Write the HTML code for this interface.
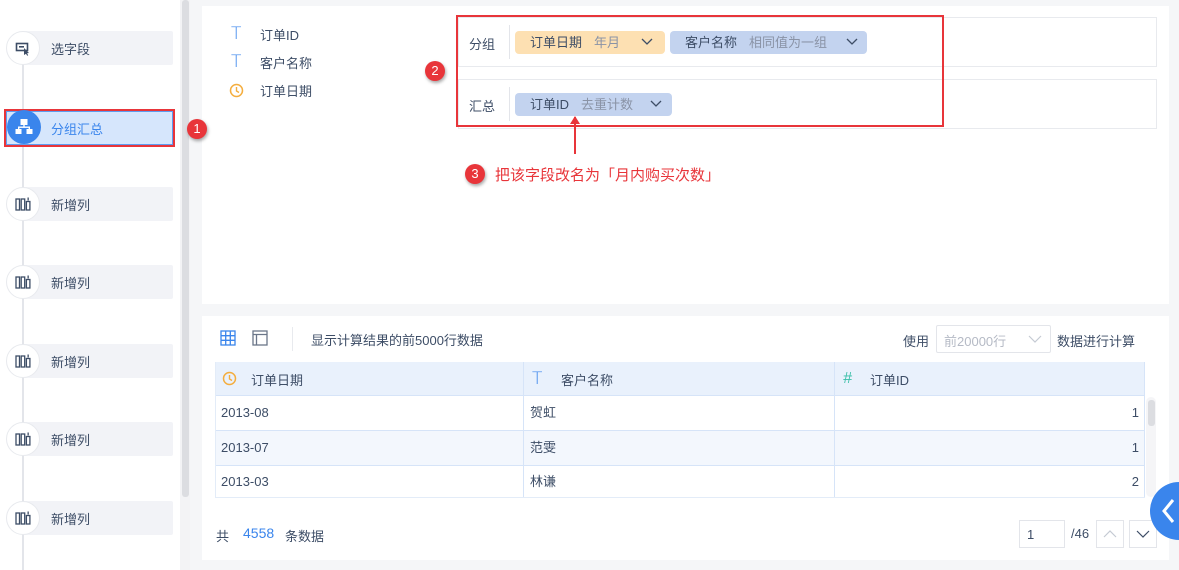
<!DOCTYPE html>
<html><head><meta charset="utf-8"><style>
*{margin:0;padding:0;box-sizing:border-box}
body{width:1179px;height:570px;position:relative;overflow:hidden;background:#f5f6f8;font-family:"Liberation Sans","Noto Sans CJK SC",sans-serif;font-size:13px;color:#3d4d66}
.abs{position:absolute}
.side{left:0;top:0;width:180px;height:570px;background:#fff}
.vline{left:22px;top:40px;width:2px;height:530px;background:#e3e5ea}
.item{left:23px;width:150px;height:34px;background:#f2f3f7;border-radius:2px}
.item span{position:absolute;left:28px;top:8px;font-size:13px}
.circ{width:34px;height:34px;border-radius:50%;background:#fff;border:1px solid #e8eaee;left:6px}
.badge{width:20px;height:20px;border-radius:50%;background:#e8353a;color:#fff;font-size:13px;text-align:center;line-height:20px;box-shadow:1px 2px 3px rgba(0,0,0,.35);z-index:5}
.chip{height:23px;border-radius:4px;line-height:23px;font-size:13px;padding-left:15px}
.chip i{font-style:normal;color:#8a93a6;margin-left:12px}
.td{position:absolute;height:33px;line-height:33px;font-size:13px;padding:0 6px}
.tt{color:#3a85ec;font-size:17px;font-family:"DejaVu Sans",sans-serif;font-weight:300;line-height:16px}
</style></head><body>
<div class="abs side"></div>
<div class="abs" style="left:180px;top:0;width:10px;height:570px;background:#f3f3f5"></div>
<div class="abs" style="left:182px;top:0;width:7px;height:497px;background:#dcdde1;border-radius:3px"></div>
<div class="abs vline"></div>

<div class="abs item" style="top:31px"><span>选字段</span></div>
<div class="abs circ" style="top:31px"><svg width="32" height="32" viewBox="0 0 32 32"><rect x="9.5" y="11.5" width="11" height="7" fill="none" stroke="#3d4d66" stroke-width="1.6"/><rect x="12" y="14" width="5" height="1.6" fill="#3d4d66"/><path d="M17 16l5 5-2 .3 1.2 2-1 .5-1.2-2L17 23z" fill="#3d4d66"/></svg></div>

<div class="abs" style="left:4px;top:109px;width:171px;height:38px;border:2px solid #e8353a"></div>
<div class="abs" style="left:6px;top:111px;width:167px;height:34px;background:#d6e6fc;border:1px solid #5e9cf0"></div>
<div class="abs" style="left:7px;top:110px;width:34px;height:34px;border-radius:50%;background:#3a85ec"><svg width="34" height="34" viewBox="0 0 34 34" fill="#fff"><rect x="13.5" y="9" width="7" height="6"/><rect x="16.3" y="14" width="1.4" height="3"/><rect x="11" y="16.5" width="12" height="1.4"/><rect x="11" y="16.5" width="1.4" height="3"/><rect x="21.6" y="16.5" width="1.4" height="3"/><rect x="8.5" y="19" width="6" height="5"/><rect x="19.5" y="19" width="6" height="5"/></svg></div>
<div class="abs" style="left:51px;top:119px;color:#3a85ec;font-size:13px">分组汇总</div>

<div class="abs item" style="top:187px"><span>新增列</span></div>
<div class="abs item" style="top:265px"><span>新增列</span></div>
<div class="abs item" style="top:344px"><span>新增列</span></div>
<div class="abs item" style="top:422px"><span>新增列</span></div>
<div class="abs item" style="top:501px"><span>新增列</span></div>
<svg width="0" height="0" style="position:absolute"><defs><g id="ic"><rect x="9" y="11" width="3.5" height="11" fill="none" stroke="#3d4d66" stroke-width="1.3"/><rect x="14.2" y="11" width="3.5" height="11" fill="none" stroke="#3d4d66" stroke-width="1.3"/><rect x="19.4" y="13.5" width="3.5" height="8.5" fill="none" stroke="#3d4d66" stroke-width="1.3"/><path d="M21.15 9.5v3" stroke="#3d4d66" stroke-width="1.3"/></g></defs></svg>
<div class="abs circ" style="top:187px"><svg width="32" height="32"><use href="#ic"/></svg></div>
<div class="abs circ" style="top:265px"><svg width="32" height="32"><use href="#ic"/></svg></div>
<div class="abs circ" style="top:344px"><svg width="32" height="32"><use href="#ic"/></svg></div>
<div class="abs circ" style="top:422px"><svg width="32" height="32"><use href="#ic"/></svg></div>
<div class="abs circ" style="top:501px"><svg width="32" height="32"><use href="#ic"/></svg></div>

<!-- top panel -->
<div class="abs" style="left:202px;top:6px;width:967px;height:298px;background:#fff"></div>
<div class="abs badge" style="left:187px;top:119px">1</div>
<div class="abs tt" style="left:231px;top:26px">T</div>
<div class="abs tt" style="left:231px;top:54px">T</div>
<svg class="abs" style="left:229px;top:83px" width="15" height="15"><circle cx="7.5" cy="7.5" r="6" fill="none" stroke="#f4ad3d" stroke-width="1.5"/><path d="M7.5 4v4l2.5 1.5" fill="none" stroke="#f4ad3d" stroke-width="1.4"/></svg>
<div class="abs" style="left:260px;top:25px">订单ID</div>
<div class="abs" style="left:260px;top:53px">客户名称</div>
<div class="abs" style="left:260px;top:81px">订单日期</div>

<div class="abs" style="left:458px;top:17px;width:699px;height:50px;border:1px solid #e8eaee"></div>
<div class="abs" style="left:458px;top:79px;width:699px;height:50px;border:1px solid #e8eaee"></div>
<div class="abs" style="left:469px;top:34px">分组</div>
<div class="abs" style="left:469px;top:96px">汇总</div>
<div class="abs" style="left:509px;top:25px;width:1px;height:34px;background:#e3e5ea"></div>
<div class="abs" style="left:509px;top:87px;width:1px;height:34px;background:#e3e5ea"></div>
<div class="abs chip" style="left:515px;top:31px;width:150px;background:#fde0b2">订单日期<i>年月</i></div>
<div class="abs chip" style="left:670px;top:31px;width:197px;background:#c3d3ef">客户名称<i>相同值为一组</i></div>
<div class="abs chip" style="left:515px;top:93px;width:157px;background:#c3d3ef">订单ID<i>去重计数</i></div>
<svg class="abs" style="left:640px;top:36px" width="14" height="12"><path d="M2 3l5 5 5-5" fill="none" stroke="#3d4d66" stroke-width="1.3"/></svg>
<svg class="abs" style="left:845px;top:36px" width="14" height="12"><path d="M2 3l5 5 5-5" fill="none" stroke="#3d4d66" stroke-width="1.3"/></svg>
<svg class="abs" style="left:649px;top:98px" width="14" height="12"><path d="M2 3l5 5 5-5" fill="none" stroke="#3d4d66" stroke-width="1.3"/></svg>
<div class="abs" style="left:456px;top:15px;width:488px;height:112px;border:2px solid #e8353a"></div>
<div class="abs badge" style="left:425px;top:61px">2</div>
<svg class="abs" style="left:568px;top:114px" width="14" height="42"><path d="M7 3v37" stroke="#e8353a" stroke-width="2"/><path d="M2 10L7 2 12 10z" fill="#e8353a"/></svg>
<div class="abs badge" style="left:465px;top:164px">3</div>
<div class="abs" style="left:495px;top:164px;color:#e8353a;font-size:15px">把该字段改名为「月内购买次数」</div>

<!-- bottom panel -->
<div class="abs" style="left:202px;top:316px;width:967px;height:244px;background:#fff"></div>
<svg class="abs" style="left:220px;top:330px" width="16" height="16"><g fill="none" stroke="#3a85ec" stroke-width="1.3"><rect x="1" y="1" width="14" height="14"/><path d="M1 5.7h14M1 10.3h14M5.7 1v14M10.3 1v14"/></g></svg>
<svg class="abs" style="left:252px;top:330px" width="16" height="16"><g fill="none" stroke="#6b7689" stroke-width="1.3"><rect x="1" y="1" width="14" height="14"/><path d="M1 4.5h14M4.5 4.5v10.5"/></g></svg>
<div class="abs" style="left:292px;top:327px;width:1px;height:24px;background:#e8eaee"></div>
<div class="abs" style="left:311px;top:330px">显示计算结果的前5000行数据</div>
<div class="abs" style="left:903px;top:331px">使用</div>
<div class="abs" style="left:936px;top:325px;width:115px;height:28px;border:1px solid #e3e5ea;border-radius:2px;color:#b5bac5;padding:5px 7px">前20000行</div>
<svg class="abs" style="left:1028px;top:333px" width="14" height="12"><path d="M1 3l6 6 6-6" fill="none" stroke="#c5cad3" stroke-width="1.2"/></svg>
<div class="abs" style="left:1057px;top:331px">数据进行计算</div>

<div class="abs" style="left:215px;top:362px;width:930px;height:33px;background:#e9f1fc"></div>
<div class="abs" style="left:215px;top:430px;width:930px;height:35px;background:#f3f7fd"></div>
<div class="abs" style="left:215px;top:395px;width:930px;height:1px;background:#d6e4f8"></div>
<div class="abs" style="left:215px;top:430px;width:930px;height:1px;background:#d6e4f8"></div>
<div class="abs" style="left:215px;top:465px;width:930px;height:1px;background:#d6e4f8"></div>
<div class="abs" style="left:215px;top:497px;width:930px;height:1px;background:#e3ecf8"></div>
<div class="abs" style="left:523px;top:362px;width:1px;height:135px;background:#d6e4f8"></div>
<div class="abs" style="left:834px;top:362px;width:1px;height:135px;background:#d6e4f8"></div>
<div class="abs" style="left:1144px;top:362px;width:1px;height:135px;background:#d6e4f8"></div>
<div class="abs" style="left:215px;top:362px;width:1px;height:135px;background:#e3ecf8"></div>
<svg class="abs" style="left:222px;top:371px" width="15" height="15"><circle cx="7.5" cy="7.5" r="6" fill="none" stroke="#f4ad3d" stroke-width="1.5"/><path d="M7.5 4v4l2.5 1.5" fill="none" stroke="#f4ad3d" stroke-width="1.4"/></svg>
<div class="abs" style="left:251px;top:370px">订单日期</div>
<div class="abs tt" style="left:532px;top:371px">T</div>
<div class="abs" style="left:561px;top:370px">客户名称</div>
<div class="abs" style="left:843px;top:371px;color:#3bbfa8;font-size:16px;font-style:italic;line-height:16px">#</div>
<div class="abs" style="left:870px;top:370px">订单ID</div>
<div class="td" style="left:215px;top:396px">2013-08</div>
<div class="td" style="left:524px;top:396px">贺虹</div>
<div class="td" style="left:835px;top:396px;width:310px;text-align:right">1</div>
<div class="td" style="left:215px;top:431px">2013-07</div>
<div class="td" style="left:524px;top:431px">范雯</div>
<div class="td" style="left:835px;top:431px;width:310px;text-align:right">1</div>
<div class="td" style="left:215px;top:465px">2013-03</div>
<div class="td" style="left:524px;top:465px">林谦</div>
<div class="td" style="left:835px;top:465px;width:310px;text-align:right">2</div>
<div class="abs" style="left:1146px;top:397px;width:10px;height:100px;background:#f5f5f7;border-radius:5px"></div>
<div class="abs" style="left:1148px;top:400px;width:7px;height:26px;background:#dcdde1;border-radius:3px"></div>

<div class="abs" style="left:216px;top:526px">共</div>
<div class="abs" style="left:243px;top:525px;color:#3a85ec;font-size:14px">4558</div>
<div class="abs" style="left:285px;top:526px">条数据</div>
<div class="abs" style="left:1019px;top:520px;width:46px;height:28px;border:1px solid #e3e5ea;padding:6px 7px;font-size:13px">1</div>
<div class="abs" style="left:1071px;top:526px">/46</div>
<div class="abs" style="left:1096px;top:520px;width:28px;height:28px;border:1px solid #e3e5ea"></div>
<svg class="abs" style="left:1103px;top:528px" width="14" height="12"><path d="M1 9l6-6 6 6" fill="none" stroke="#c5cad3" stroke-width="1.2"/></svg>
<div class="abs" style="left:1129px;top:520px;width:28px;height:28px;border:1px solid #e3e5ea"></div>
<svg class="abs" style="left:1136px;top:528px" width="14" height="12"><path d="M1 3l6 6 6-6" fill="none" stroke="#3d4d66" stroke-width="1.2"/></svg>
<div class="abs" style="left:1150px;top:482px;width:58px;height:58px;border-radius:50%;background:#3a85ec"></div>
<svg class="abs" style="left:1158px;top:497px" width="20" height="28"><path d="M15 3L6 14l9 11" fill="none" stroke="#fff" stroke-width="3"/></svg>
</body></html>
